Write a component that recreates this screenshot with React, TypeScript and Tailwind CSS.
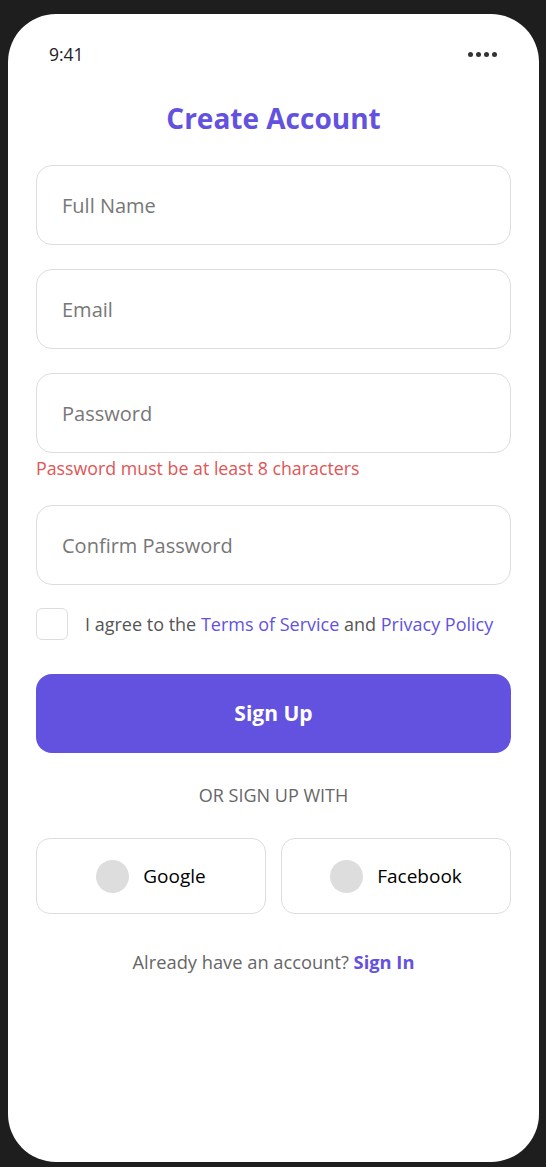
import React from "react";

const font = { fontFamily: '"Open Sans", "Noto Sans", sans-serif' };

function Field({ placeholder, type = "text" }: { placeholder: string; type?: string }) {
  return (
    <input
      type={type}
      placeholder={placeholder}
      className="h-[80px] w-full rounded-[16px] border border-[#dddddd] bg-white px-[25px] text-[20px] text-[#333] outline-none placeholder:text-[#777777]"
    />
  );
}

function SocialButton({ label }: { label: string }) {
  return (
    <button className="flex h-[76px] flex-1 items-center justify-center gap-[14px] rounded-[14px] border border-[#dddddd] bg-white">
      <span className="h-[33px] w-[33px] rounded-full bg-[#dddddd]" />
      <span className="text-[19px] text-black">{label}</span>
    </button>
  );
}

export default function App() {
  return (
    <div className="h-[1167px] w-full bg-[#1e1e1e] pl-[8px] pr-[7px] pt-[14px]" style={font}>
      <div className="flex h-[1148px] w-[531px] flex-col rounded-[48px] bg-white">
        {/* status bar */}
        <div className="mt-[28px] flex h-[24px] items-center justify-between pl-[41px] pr-[42px]">
          <span className="text-[17.5px] text-[#222]">9:41</span>
          <div className="flex gap-[3px]">
            <span className="h-[5px] w-[5px] rounded-full bg-[#333]" />
            <span className="h-[5px] w-[5px] rounded-full bg-[#333]" />
            <span className="h-[5px] w-[5px] rounded-full bg-[#333]" />
            <span className="h-[5px] w-[5px] rounded-full bg-[#333]" />
          </div>
        </div>

        <h1 className="mt-[34px] text-center text-[28px] font-bold leading-[36px] text-[#6352e0]">
          Create Account
        </h1>

        <div className="mt-[29px] flex flex-col px-[28px]">
          <div className="flex flex-col gap-[24px]">
            <Field placeholder="Full Name" />
            <Field placeholder="Email" type="email" />
            <Field placeholder="Password" type="password" />
          </div>
          <p className="mt-[4px] text-[17.8px] leading-[22px] text-[#e05656]">
            Password must be at least 8 characters
          </p>
          <div className="mt-[26px]">
            <Field placeholder="Confirm Password" type="password" />
          </div>

          <label className="mt-[23px] flex items-center gap-[17px]">
            <span className="h-[32px] w-[32px] shrink-0 rounded-[6px] border border-[#dddddd]" />
            <span className="text-[18px] text-[#555]">
              I agree to the <span className="text-[#6352e0]">Terms of Service</span> and{" "}
              <span className="text-[#6352e0]">Privacy Policy</span>
            </span>
          </label>

          <button className="mt-[34px] h-[79px] w-full rounded-[16px] bg-[#6252df] text-[21px] font-bold text-white">
            Sign Up
          </button>

          <p className="mt-[31px] text-center text-[18px] leading-[22px] text-[#666]">OR SIGN UP WITH</p>

          <div className="mt-[32px] flex gap-[15px]">
            <SocialButton label="Google" />
            <SocialButton label="Facebook" />
          </div>

          <p className="mt-[36px] text-center text-[18.3px] leading-[24px] text-[#666]">
            Already have an account?{" "}
            <span className="font-bold text-[#6352e0]">Sign In</span>
          </p>
        </div>
      </div>
    </div>
  );
}
